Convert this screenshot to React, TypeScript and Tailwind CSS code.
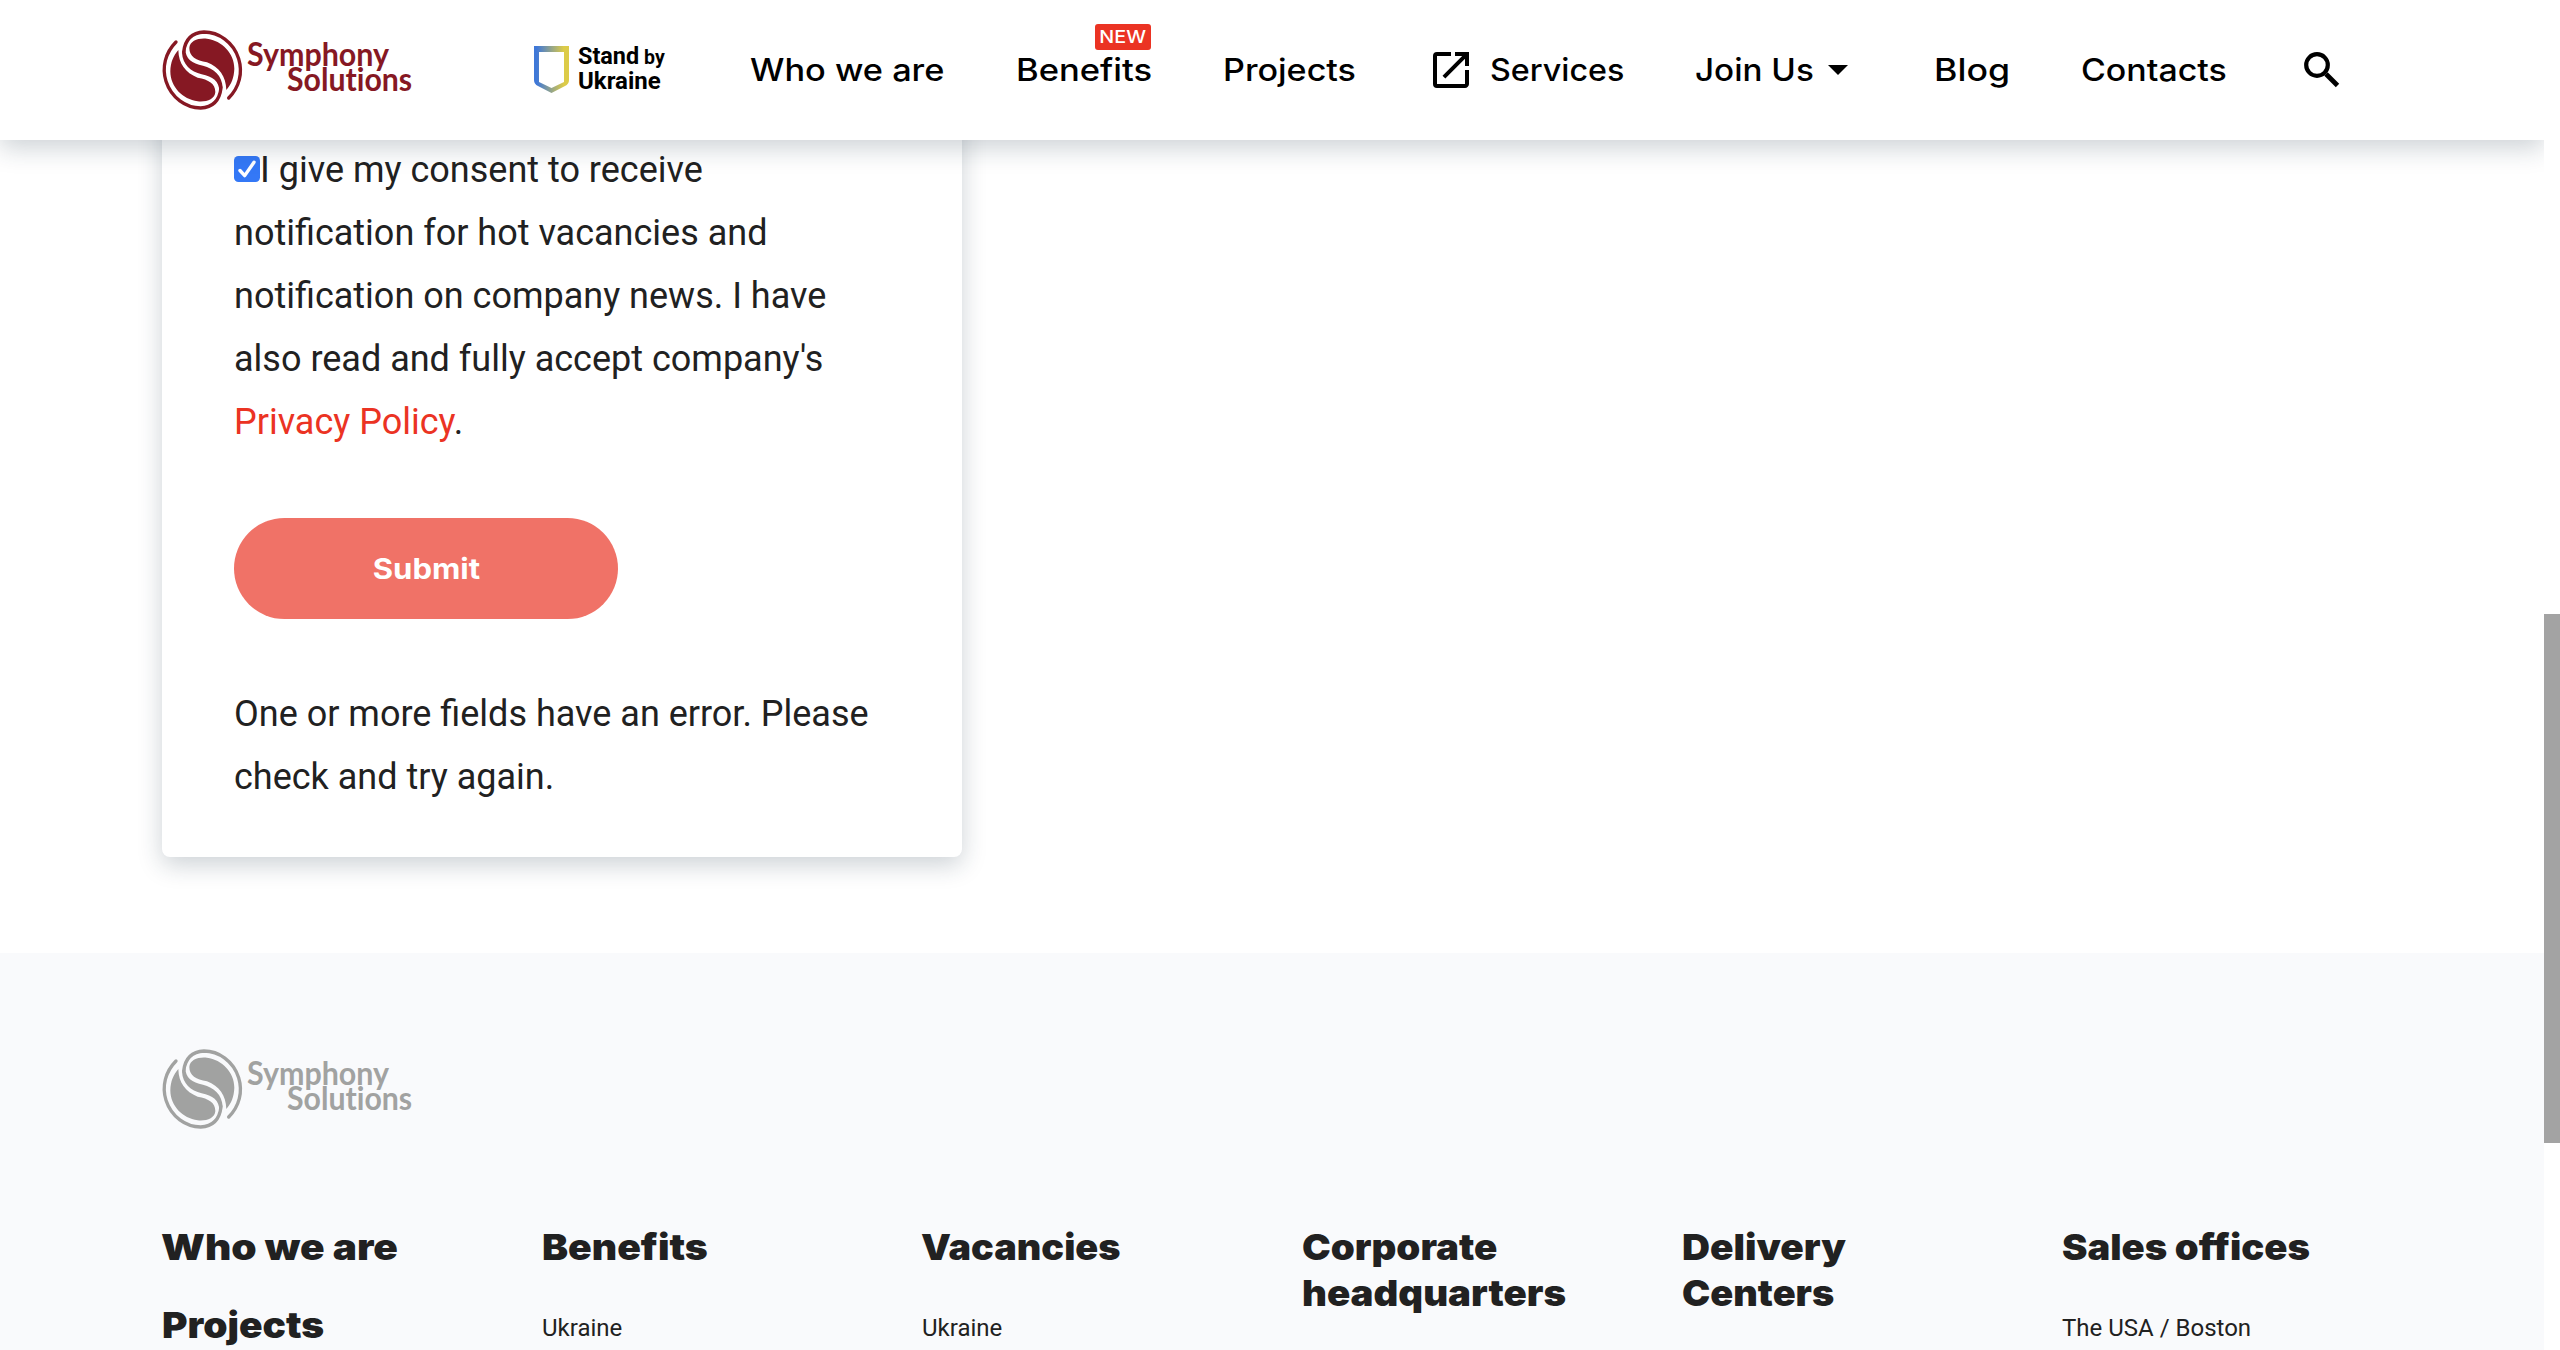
import { MdOpenInNew } from "react-icons/md";

function LogoHalf() {
  return (
    <>
      <path
        d="M60 60 C28 92 17 136 30 178 C46 228 90 258 134 258 C172 256 191 232 195 198"
        fill="none"
        stroke="currentColor"
        strokeWidth="10"
        strokeLinecap="round"
      />
      <path
        d="M67 84 C68 125 88 152 125 167 C158 173 178 184 178 210 C177 232 150 241 125 238 C80 232 43 195 43 148 C44 120 52 102 67 84 Z"
        fill="currentColor"
      />
    </>
  );
}

function Logo({ color }: { color: string }) {
  return (
    <div className={`flex h-[94px] w-[262px] ${color}`}>
      <svg className="h-[94px] w-[94px] shrink-0" viewBox="0 0 282 282">
        <LogoHalf />
        <g transform="rotate(180 139 144)">
          <LogoHalf />
        </g>
        <path
          d="M78 92 C80 128 104 148 137 157 C170 164 190 178 190 208 L200 196 C198 160 174 140 141 131 C108 124 88 110 88 80 Z"
          fill="currentColor"
        />
      </svg>
      <div className="flex flex-col pt-[19px] font-['Lato'] text-[32px] leading-[25px] font-bold [font-variant-ligatures:none]">
        <span className="-ml-[3px] origin-left scale-x-[0.95] whitespace-nowrap">Symphony</span>
        <span className="ml-[37px] origin-left scale-x-[0.945] whitespace-nowrap">Solutions</span>
      </div>
    </div>
  );
}

function StandByUkraine() {
  return (
    <div className="flex h-[50px] items-start gap-[9px] text-black">
      <svg className="mt-[2px] h-[47px] w-[35px] shrink-0" viewBox="0 0 35 47">
        <defs>
          <linearGradient id="shield" x1="0" x2="1" y1="0" y2="0">
            <stop offset="0.08" stopColor="#3f78d8" />
            <stop offset="0.85" stopColor="#dccb48" />
          </linearGradient>
        </defs>
        <path
          fillRule="evenodd"
          fill="url(#shield)"
          d="M0 0 H35 V34 Q35 38 31 40 L17.5 47 L4 40 Q0 38 0 34 Z M5 6 V36 L17.5 42 L30 36 V6 Z"
        />
      </svg>
      <div className="pt-[1px] font-['Roboto'] text-[24px] leading-[23.5px] font-bold">
        <div className="flex origin-left scale-x-[0.975] items-baseline gap-[5px]">
          <span>Stand</span>
          <span className="text-[20px]">by</span>
        </div>
        <div>Ukraine</div>
      </div>
    </div>
  );
}

const navText = "block origin-left whitespace-nowrap";

function Header() {
  return (
    <header className="relative z-10 flex h-[140px] w-[2544px] items-center bg-white pb-[2px] pl-[156px] font-['Inter'] text-[31px] leading-[40px] font-medium text-black shadow-[0_8px_24px_rgba(28,50,68,0.22)]">
      <Logo color="text-[#861823]" />
      <div className="ml-[116px] w-[134px]">
        <StandByUkraine />
      </div>
      <nav className="flex items-center pt-[1px]">
        <a className="ml-[82px] w-[193px]">
          <span className={`${navText} scale-x-[1.107]`}>Who we are</span>
        </a>
        <a className="relative ml-[73px] w-[135px]">
          <span className={`${navText} scale-x-[1.115]`}>Benefits</span>
          <span className="absolute -top-[26px] right-0 flex h-[26px] w-[56px] items-center justify-center rounded-[3px] bg-[#eb3323] text-[17.5px] leading-none font-medium text-white">
            <span className="scale-x-[1.13]">NEW</span>
          </span>
        </a>
        <a className="ml-[72px] w-[132px]">
          <span className={`${navText} scale-x-[1.1]`}>Projects</span>
        </a>
        <a className="ml-[72px] flex w-[199px] items-center">
          <MdOpenInNew className="size-[48px] shrink-0" />
          <span className="ml-[15px]">
            <span className={`${navText} scale-x-[1.04]`}>Services</span>
          </span>
        </a>
        <a className="ml-[69px] flex w-[153px] items-center">
          <span className="w-[133px]">
            <span className={`${navText} scale-x-[1.071]`}>Join Us</span>
          </span>
          <svg className="h-[10px] w-[20px]" viewBox="0 0 20 10">
            <path d="M0 0 H20 L10 10 Z" fill="currentColor" />
          </svg>
        </a>
        <a className="ml-[86px] w-[75px]">
          <span className={`${navText} scale-x-[1.15]`}>Blog</span>
        </a>
        <a className="ml-[72px] w-[146px]">
          <span className={`${navText} scale-x-[1.094]`}>Contacts</span>
        </a>
        <svg className="ml-[77px] h-[36px] w-[36px]" viewBox="0 0 36 36" fill="none" stroke="currentColor">
          <circle cx="13" cy="13" r="10.8" strokeWidth="4.2" />
          <path d="M22 22 L33.5 33.5" strokeWidth="4.8" />
        </svg>
      </nav>
    </header>
  );
}

function ConsentForm() {
  return (
    <section className="-mt-10 ml-[162px] w-[800px] rounded-lg bg-white px-[72px] pt-[39px] pb-[48px] font-['Roboto'] text-[36px] leading-[63px] text-[#212121] shadow-[0_8px_24px_rgba(28,50,68,0.22)]">
      <p>
        <svg className="inline-block h-[26px] w-[26px] align-baseline" viewBox="0 0 26 26">
          <rect width="26" height="26" rx="4.5" fill="#3478f6" />
          <path
            d="M6 14.5 L10.7 19.6 L20 6.2"
            fill="none"
            stroke="#fff"
            strokeWidth="3.4"
            strokeLinecap="round"
            strokeLinejoin="round"
          />
        </svg>
        I give my consent to receive notification for hot vacancies and notification on company news. I have also
        read and fully accept company's <a className="text-[#eb3323]">Privacy Policy</a>.
      </p>
      <button className="mt-[64px] flex h-[101px] w-[384px] items-center justify-center rounded-full bg-[#f07267] font-['Inter'] text-[28px] leading-[40px] font-bold text-white">
        <span className="scale-x-[1.109]">Submit</span>
      </button>
      <p className="mt-[64px]">One or more fields have an error. Please check and try again.</p>
    </section>
  );
}

const headText = "block origin-left whitespace-nowrap";

function Footer() {
  return (
    <footer className="mt-[96px] h-[397px] w-[2544px] overflow-hidden bg-[#f9fafc] pt-[88px] text-[#212121]">
      <div className="pl-[156px]">
        <Logo color="text-[#a1a2a1]" />
      </div>
      <div className="mt-[89px] ml-[162px] grid grid-cols-[repeat(6,380px)] font-['Inter'] text-[36px] leading-[46px] font-black">
        <div>
          <span className={`${headText} -ml-[1px] scale-x-[1.128]`}>Who we are</span>
          <span className={`${headText} mt-[32px] scale-x-[1.08]`}>Projects</span>
        </div>
        <div>
          <span className={`${headText} scale-x-[1.085]`}>Benefits</span>
          <span className="mt-[35px] block font-['Roboto'] text-[24px] font-normal">Ukraine</span>
        </div>
        <div>
          <span className={`${headText} -ml-[1px] scale-x-[1.05]`}>Vacancies</span>
          <span className="mt-[35px] block font-['Roboto'] text-[24px] font-normal">Ukraine</span>
        </div>
        <div>
          <span className={`${headText} scale-x-[1.069]`}>Corporate</span>
          <span className={`${headText} scale-x-[1.067]`}>headquarters</span>
        </div>
        <div>
          <span className={`${headText} scale-x-[1.077]`}>Delivery</span>
          <span className={`${headText} scale-x-[1.052]`}>Centers</span>
        </div>
        <div>
          <span className={`${headText} scale-x-[1.062]`}>Sales offices</span>
          <span className="mt-[35px] block font-['Roboto'] text-[24px] font-normal">The USA / Boston</span>
        </div>
      </div>
    </footer>
  );
}

export default function App() {
  return (
    <div className="flex h-[1350px] w-[2560px] overflow-hidden bg-white">
      <div className="w-[2544px] overflow-hidden">
        <Header />
        <ConsentForm />
        <Footer />
      </div>
      <div className="w-[16px] bg-white pt-[614px]">
        <div className="h-[529px] bg-[#a3a3a3]" />
      </div>
    </div>
  );
}
